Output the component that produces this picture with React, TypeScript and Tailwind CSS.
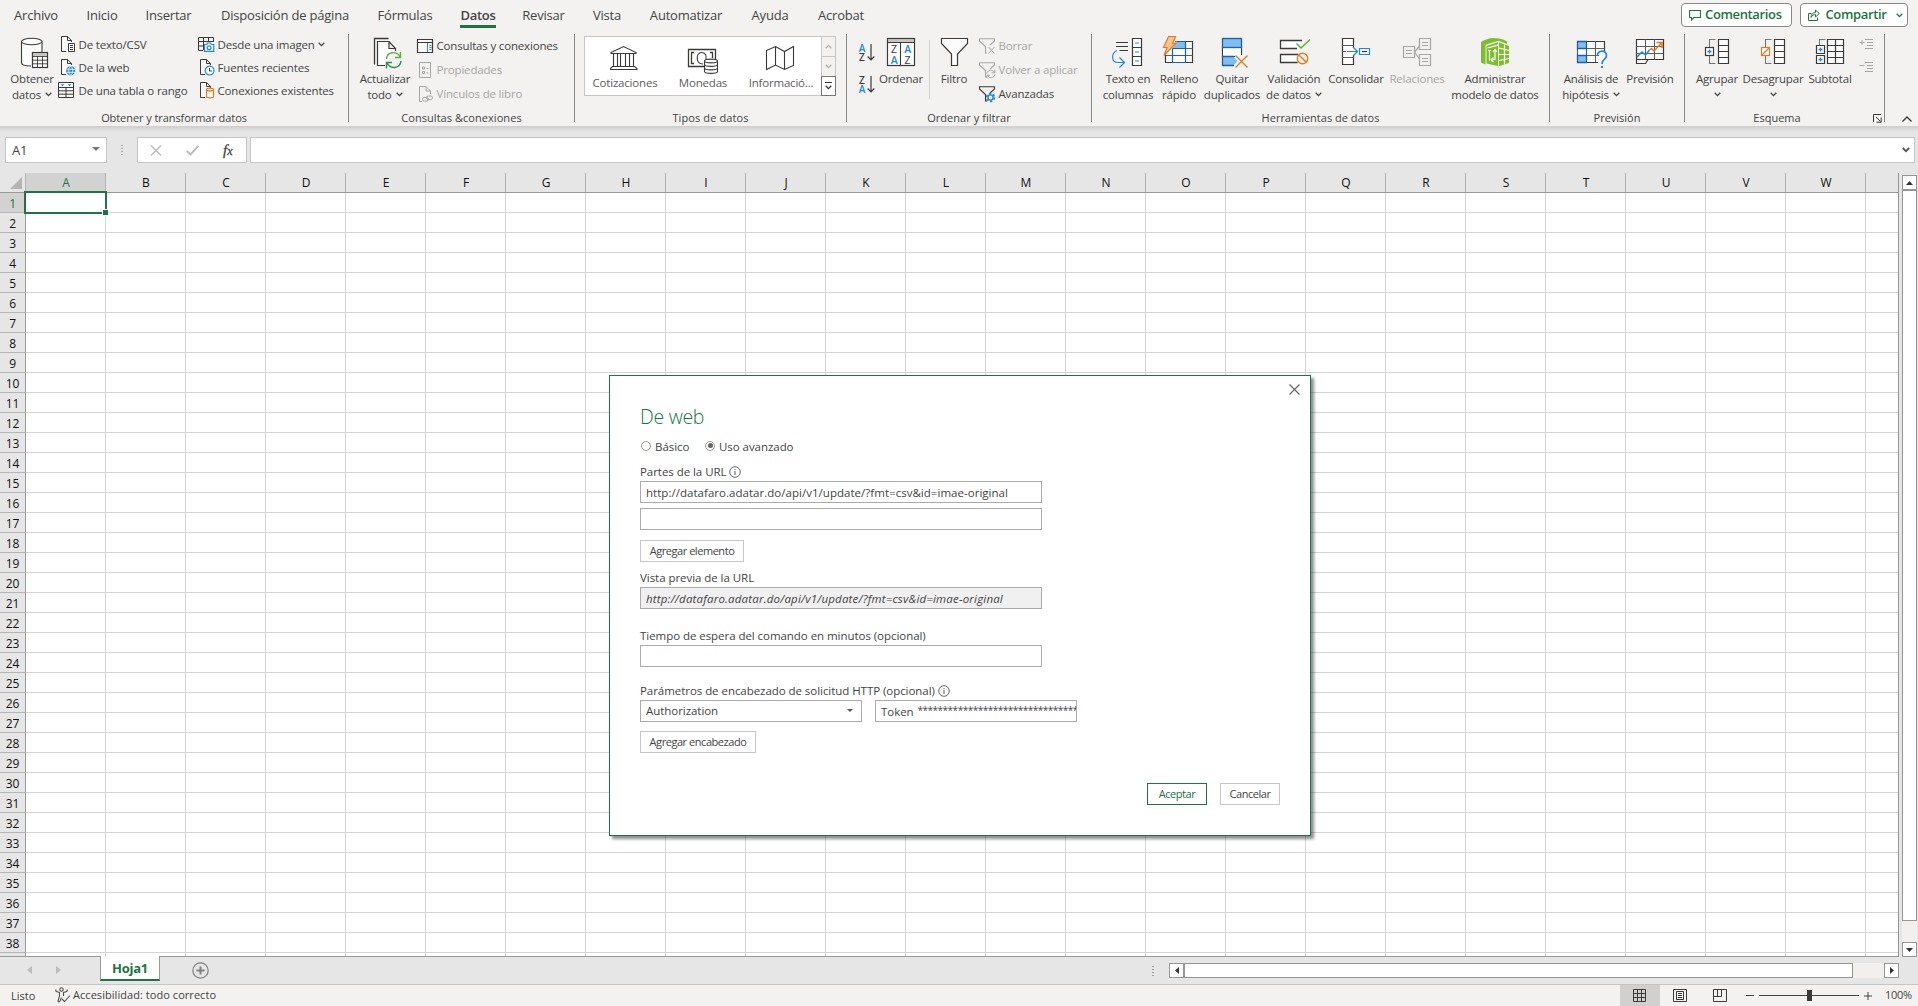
import type { ReactNode } from "react";
import clsx from "clsx";

const DARK = "#3b3a39";
const GRAY = "#a8a6a4";
const BLUE = "#2488d8";
const ORANGE = "#e07b28";
const GREEN = "#217346";

const tabs = [
  { label: "Archivo", width: "w-[72px]" },
  { label: "Inicio", width: "w-[60px]" },
  { label: "Insertar", width: "w-[73px]" },
  { label: "Disposición de página", width: "w-[160px]" },
  { label: "Fórmulas", width: "w-[80px]" },
  { label: "Datos", width: "w-[66px]", active: true },
  { label: "Revisar", width: "w-[65px]" },
  { label: "Vista", width: "w-[62px]" },
  { label: "Automatizar", width: "w-[96px]" },
  { label: "Ayuda", width: "w-[72px]" },
  { label: "Acrobat", width: "w-[70px]" },
];

const columns = "ABCDEFGHIJKLMNOPQRSTUVW".split("");
const rows = Array.from({ length: 39 }, (_, i) => i + 1);

/* ---------- Small shared pieces ---------- */

const Chevron = ({ className = "" }: { className?: string }) => (
  <svg width="7" height="5" viewBox="0 0 7 5" fill="none" stroke="currentColor" strokeWidth="1.3" className={clsx("inline-block", className)}>
    <path d="M0.7 0.8L3.5 3.6L6.3 0.8" />
  </svg>
);

const Icon36 = ({ children }: { children: ReactNode }) => (
  <svg width="36" height="36" viewBox="0 0 36 36" fill="none" stroke={DARK} strokeWidth="1.1" className="shrink-0 overflow-visible">
    {children}
  </svg>
);

const Icon16 = ({ children, color = DARK }: { children: ReactNode; color?: string }) => (
  <svg width="17" height="17" viewBox="0 0 17 17" fill="none" stroke={color} strokeWidth="1" className="shrink-0 overflow-visible">
    {children}
  </svg>
);

const Group = ({ label, width, labelClass = "", launcher, children }: { label: string; width: string; labelClass?: string; launcher?: boolean; children: ReactNode }) => (
  <section className={clsx("flex h-[88px] shrink-0 flex-col border-r border-[#8a8886]", width)}>
    <div className="flex h-[76px] shrink-0 items-start">{children}</div>
    <div className={clsx("relative shrink-0 pt-[2px] text-center text-[11px] leading-[12px] whitespace-nowrap", labelClass)}>
      {label}
      {launcher && (
        <svg width="9" height="9" viewBox="0 0 9 9" fill="none" stroke={DARK} className="absolute top-[4px] right-[2px]">
          <path d="M0.5 8V0.5H8M3 3L7.5 7.5M8.2 3.5V8.2H3.5" />
        </svg>
      )}
    </div>
  </section>
);

const BigButton = ({ icon, lines, width, chevron, disabled }: { icon: ReactNode; lines: string[]; width: string; chevron?: boolean; disabled?: boolean }) => (
  <button className={clsx("flex shrink-0 flex-col items-center tracking-[-0.2px]", width, disabled && "text-[#a8a6a4]")}>
    {icon}
    <span className="mt-px h-4 leading-4 whitespace-nowrap">{lines[0]}</span>
    <span className="flex h-4 items-center leading-4 whitespace-nowrap">
      {lines[1]}
      {chevron && <Chevron className={lines[1] ? "-mt-px ml-1" : "-mt-[2px]"} />}
    </span>
  </button>
);

const SmallButton = ({ icon, label, disabled, chevron, height = "h-6" }: { icon: ReactNode; label: string; disabled?: boolean; chevron?: boolean; height?: string }) => (
  <button className={clsx("flex items-center gap-[2.5px] tracking-[-0.17px] whitespace-nowrap", height, disabled && "text-[#a8a6a4]")}>
    {icon}
    {label}
    {chevron && <Chevron className="ml-px" />}
  </button>
);

/* ---------- Icons ---------- */

const PageOutline = () => <path d="M7 15.5H2.5V0.5H8.5L12.5 4.5V6M8.5 0.5V4.5H12.5" fill="#fafafa" />;

const TextFileIcon = () => (
  <Icon16>
    <PageOutline />
    <path d="M9.5 7.5H15.5V15.5H9.5ZM11 9.5H14M11 11.5H14M11 13.5H14" fill="#fafafa" />
  </Icon16>
);

const WebFileIcon = () => (
  <Icon16>
    <PageOutline />
    <circle cx="11.7" cy="11.8" r="4.6" fill={BLUE} stroke="none" />
    <path d="M7.5 10.3H16M7.5 13.3H16M11.7 7.3C9 9.5 9 14 11.7 16.3M11.7 7.3C14.4 9.5 14.4 14 11.7 16.3" stroke="#fff" strokeWidth="0.8" />
  </Icon16>
);

const TableIcon = () => (
  <Icon16>
    <path d="M-0.5 0.5H14.5V15.5H-0.5ZM-0.5 5.5H14.5M-0.5 8.8H14.5M-0.5 12.2H14.5M7 5.5V15.5" fill="#fafafa" />
    <path d="M1.5 2.2H5.5L3.5 4.2ZM8.5 2.2H12.5L10.5 4.2Z" fill={BLUE} stroke="none" />
  </Icon16>
);

const ImageTableIcon = () => (
  <Icon16>
    <path d="M5 14.5H0.5V1.5H15.5V6M0.5 5.5H15.5M0.5 10H6M5.5 1.5V14M10.5 1.5V6" />
    <path d="M6.5 8.5H8.7L9.7 7H12.5L13.5 8.5H15.8V15.3H6.5Z" fill="#f3f9fd" stroke={BLUE} strokeWidth="1.2" />
    <circle cx="11.1" cy="11.8" r="1.9" stroke={BLUE} strokeWidth="1.2" />
  </Icon16>
);

const RecentIcon = () => (
  <Icon16>
    <PageOutline />
    <circle cx="11.6" cy="11.6" r="4.4" fill="#fafafa" stroke={BLUE} strokeWidth="1.2" />
    <path d="M11.5 9V12H13.8" />
  </Icon16>
);

const ConnectionFileIcon = () => (
  <Icon16>
    <PageOutline />
    <path d="M8.5 7.8V14.8C8.5 16.2 15.5 16.2 15.5 14.8V7.8" fill="#fafafa" stroke={ORANGE} strokeWidth="1.2" />
    <ellipse cx="12" cy="7.5" rx="3.5" ry="1.4" fill="#fafafa" stroke={ORANGE} strokeWidth="1.2" />
  </Icon16>
);

const PaneIcon = () => (
  <Icon16>
    <path d="M0.5 1.5H15.5V14.5H0.5ZM0.5 4.5H15.5" fill="#fafafa" strokeWidth="1.2" />
    <path d="M10.5 5V14M12.5 7.5H14.5M12.5 9.5H14.5M12.5 11.5H14.5" stroke={BLUE} />
  </Icon16>
);

const PropertiesIcon = () => (
  <Icon16 color={GRAY}>
    <path d="M2.5 0.5H13.5V15.5H2.5ZM5.5 5H7.5V7H5.5ZM5.5 9.5H7.5V11.5H5.5ZM9.5 6.5H11.5M9.5 11H11.5" />
  </Icon16>
);

const LinkFileIcon = () => (
  <Icon16 color={GRAY}>
    <path d="M5 15.5H2.5V0.5H9L13.5 5V8M9 0.5V5H13.5" />
    <rect x="5.5" y="11.5" width="6" height="3.6" rx="1.8" />
    <rect x="9.5" y="10" width="6" height="3.6" rx="1.8" />
  </Icon16>
);

const FunnelSmall = ({ color = DARK, children }: { color?: string; children: ReactNode }) => (
  <Icon16 color={color}>
    <path d="M8 15H6.5V8.5L0.5 3V0.8H15.5V3L11 7" strokeWidth="1.1" />
    {children}
  </Icon16>
);

const GetDataIcon = () => (
  <Icon36>
    <path d="M7.5 7.5V29.5C7.5 31 11 32.3 17 32.5V18H28V7.5" fill="#fcfcfc" stroke="none" />
    <path d="M7.5 7.5V29C7.5 30.8 11 31.8 17 32M28 7.5V18" />
    <ellipse cx="17.75" cy="7.5" rx="10.25" ry="3.3" fill="#fcfcfc" />
    <rect x="18.5" y="18.5" width="15" height="15" fill="#fcfcfc" />
    <rect x="19" y="19" width="14" height="3" fill="#c8c6c4" stroke="none" />
    <path d="M18.5 22.5H33.5M18.5 26.2H33.5M18.5 29.8H33.5M23.5 22.5V33.5M28.5 22.5V33.5" strokeWidth="0.9" />
    <rect x="18.5" y="18.5" width="15" height="15" />
  </Icon36>
);

const RefreshAllIcon = () => (
  <Icon36>
    <path d="M7.5 30.5V4.5H21.5" strokeWidth="1.3" />
    <path d="M18 31.5H10.5V7.5H22L28.5 14.5V17M22 7.5V14.5H28.5" fill="#fcfcfc" strokeWidth="1.2" />
    <path d="M19.5 25C20 17.5 30 16.5 33.2 23M33.5 18V23.5H28" stroke="#62ad45" strokeWidth="1.4" />
    <path d="M34 27C33 35 23.5 35.5 20 29M19.5 34.5V28.5H25" stroke="#2e8b4b" strokeWidth="1.4" />
  </Icon36>
);

const BankIcon = () => (
  <svg width="32" height="28" viewBox="0 0 32 28" fill="none" stroke={DARK} strokeWidth="1.1" className="mr-px">
    <path d="M2 8.5L14.5 2.5L27 8.5V9.5H2ZM4.5 9.5V22.5M8.5 9.5V22.5M11.5 9.5V22.5M16.5 9.5V22.5M20.5 9.5V22.5M24.5 9.5V22.5M3.5 22.5H25.5L28 24.5V25.5H1.5V24.5Z" />
  </svg>
);

const CurrencyIcon = () => (
  <svg width="32" height="28" viewBox="0 0 32 28" fill="none" stroke={DARK} strokeWidth="1.1" className="overflow-visible">
    <path d="M18 22.5H1.5V5.5H28.5V15M7 8.5H4.5V19.5H7M23 8.5H25.5V14" strokeWidth="1.3" />
    <path d="M16 20C8.5 20 8.5 8.5 14.5 8.5C18.5 8.5 19.5 11.5 19 15" />
    <path d="M17.5 17V27.5C17.5 30 30.5 30 30.5 27.5V17" fill="#fff" />
    <ellipse cx="24" cy="17" rx="6.5" ry="1.9" fill="#fff" />
    <path d="M17.5 20.5C17.5 23 30.5 23 30.5 20.5M17.5 24C17.5 26.5 30.5 26.5 30.5 24" />
  </svg>
);

const MapIcon = () => (
  <svg width="32" height="28" viewBox="0 0 32 28" fill="none" stroke={DARK} strokeWidth="1.1" className="overflow-visible">
    <path d="M1.5 6.5L10.5 2.5L19.5 7.5L28.5 2.5V21.5L19.5 25.5L10.5 21L1.5 25.5ZM10.5 2.5V21M19.5 7.5V25.5" />
  </svg>
);

const SortIcon = ({ top, bottom, topClass, bottomClass }: { top: string; bottom: string; topClass: string; bottomClass: string }) => (
  <button className="flex h-[18px] items-start">
    <span className="flex w-[8px] flex-col text-[10px] leading-[9px] font-semibold">
      <span className={topClass}>{top}</span>
      <span className={bottomClass}>{bottom}</span>
    </span>
    <svg width="8" height="17" viewBox="0 0 8 17" fill="none" stroke={DARK} strokeWidth="1.2" className="ml-px">
      <path d="M4 0V16M0.7 12.5L4 16L7.3 12.5" />
    </svg>
  </button>
);

const SortDialogIcon = () => (
  <Icon36>
    <rect x="4.5" y="4.5" width="27" height="27" fill="#fff" />
    <rect x="5" y="5" width="26" height="3.5" fill="#c8c6c4" stroke="none" />
    <path d="M4.5 8.5H31.5M17.5 8.5V31.5" />
    <rect x="4.5" y="4.5" width="27" height="27" />
    <g stroke="none" fontSize="10.5" textAnchor="middle" className="font-semibold">
      <text x="11" y="19" fill={DARK} fontWeight="400">Z</text>
      <text x="11" y="29.5" fill={BLUE}>A</text>
      <text x="24.5" y="19" fill={BLUE}>A</text>
      <text x="24.5" y="29.5" fill={DARK} fontWeight="400">Z</text>
    </g>
  </Icon36>
);

const FilterIcon = () => (
  <Icon36>
    <path d="M5.5 4.5H31.5V9.5L21.5 20V31.5H15.5V20L5.5 9.5Z" fill="#fcfcfc" strokeWidth="1.2" />
  </Icon36>
);

const TextColumnsIcon = () => (
  <Icon36>
    <path d="M6 8.5H18M6 12.5H18M9.5 16.5H18" strokeWidth="1.2" />
    <path d="M22.5 4.5H31.5V31.5H22.5ZM22.5 13.5H31.5M22.5 22.5H31.5" fill="#fcfcfc" strokeWidth="1.2" />
    <path d="M25 9H29M25 18H29M25 27H29" stroke={BLUE} strokeWidth="1.2" />
    <path d="M7 16.5C1 19 1 28.5 8 28.5H14.5M9.5 23.5L14.5 28.5L9.5 33.5" stroke={BLUE} strokeWidth="1.2" />
  </Icon36>
);

const FlashFillIcon = () => (
  <Icon36>
    <path d="M4.5 20V28.5H31.5V7.5H14" fill="#fcfcfc" strokeWidth="1.2" />
    <path d="M4.5 21.5H31.5M12 14.5H31.5" stroke="#605e5c" />
    <path d="M14 7.5H24.5V14.5H11.5Z" fill="#83bdec" stroke="none" />
    <path d="M11.5 14.5H24.5M11.5 21.5H24.5M11.5 14.5V28.5H24.5V7.5H16" stroke="#1d5fa8" strokeWidth="1.2" />
    <path d="M7.5 2.5H14.5L11.5 9.5H14.5L3 21.5L6 13.5H2.5Z" fill="#fbc58f" stroke={ORANGE} strokeWidth="1.2" />
  </Icon36>
);

const DuplicatesIcon = () => (
  <Icon36>
    <path d="M8.5 13.5V22.5H21M27.5 13.5V21" strokeWidth="1.2" />
    <rect x="9" y="14" width="18" height="8" fill="#fcfcfc" stroke="none" />
    <rect x="8.5" y="4.5" width="19" height="9" fill="#83bdec" stroke="#1d5fa8" strokeWidth="1.3" />
    <path d="M19.5 22.5H8.5V31.5H19.5L23.5 27Z" fill="#83bdec" stroke="none" />
    <path d="M20 22.5H8.5V31.5H20" stroke="#1d5fa8" strokeWidth="1.3" />
    <path d="M21.5 21.5L33.5 33.5M33.5 21.5L21.5 33.5" stroke={ORANGE} strokeWidth="1.4" />
  </Icon36>
);

const ValidationIcon = () => (
  <Icon36>
    <path d="M26 6.5H4.5V14.5H21M22 20.5H4.5V28.5H21.5" fill="#fcfcfc" strokeWidth="1.3" />
    <path d="M20.5 9.5L25 14L34 5.5" stroke="#5fae3f" strokeWidth="1.5" />
    <circle cx="26.5" cy="24.5" r="5.2" fill="#fff4e8" stroke={ORANGE} strokeWidth="1.4" />
    <path d="M22.9 20.9L30.1 28.1" stroke={ORANGE} strokeWidth="1.4" />
  </Icon36>
);

const ConsolidateIcon = () => (
  <Icon36>
    <path d="M4.5 4.5H15.5V30.5H4.5Z" fill="#fcfcfc" stroke="none" />
    <path d="M15.5 13.5V4.5H4.5V30.5H15.5V21.5" strokeWidth="1.2" />
    <path d="M4.5 11.5H15.5M4.5 17.5H8M4.5 23.5H15.5" stroke="#605e5c" />
    <path d="M9 17.5H19.5M15 13L19.5 17.5L15 22M21.5 14.5H31.5V20.5H21.5Z" stroke={BLUE} strokeWidth="1.2" />
    <path d="M24 17.5H29" />
  </Icon36>
);

const RelationsIcon = () => (
  <Icon36>
    <g stroke={GRAY} strokeWidth="1.2">
      <path d="M4.5 12.5H15.5V23.5H4.5ZM20.5 4.5H31.5V15.5H20.5ZM20.5 20.5H31.5V31.5H20.5Z" />
      <path d="M7 16.5H13M7 19.5H13M23 8.5H29M23 11.5H29M23 24.5H29M23 27.5H29M15.5 18L20.5 12M15.5 18L20.5 25" />
    </g>
  </Icon36>
);

const DataModelIcon = () => (
  <Icon36>
    <g stroke="none" fill="#7cbf2c">
      <path d="M4 8C8 5.5 12 4.2 16 4C21 4 26 4.5 30 7.5V10L21.5 6.8L8.5 10.8V30.5L4 28.5Z" />
      <path d="M9.5 12L21 8.2V32L9.5 29.5Z" />
      <path d="M22 8.2L32 12V29L22 32Z" />
    </g>
    <path d="M10.5 14L21 11.2M22 14L32 16.5M22 20.5H32M22 26.5L32 24.5M27.5 10.5V30.5" stroke="#fff" strokeWidth="1.2" />
    <path d="M12.5 16V26.5M11 16.5H14M15 27.5L14.5 25.5H18V16M16 18L18 15.5L20 18M16.5 23.5L14.2 25.7L16.5 28" stroke="#fff" strokeWidth="1.2" />
  </Icon36>
);

const WhatIfIcon = () => (
  <Icon36>
    <rect x="4.5" y="7.5" width="27" height="21" fill="#fcfcfc" stroke="none" />
    <path d="M13.5 7.5H31.5V17M13.5 28.5H25" strokeWidth="1.2" />
    <path d="M13.5 14.5H31.5M13.5 21.5H26M22.5 7.5V28.5" stroke="#605e5c" />
    <path d="M4.5 7.5H13.5V14.5H4.5ZM4.5 21.5H13.5V28.5H4.5Z" fill="#83bdec" stroke="#1d5fa8" strokeWidth="1.3" />
    <path d="M4.5 14.5V21.5M13.5 14.5V21.5" stroke="#1d5fa8" />
    <path d="M24.5 22C24.5 15.5 33.5 15.5 33.5 21.5C33.5 25.5 29 25 29 30" stroke={BLUE} strokeWidth="1.7" />
    <rect x="28" y="32" width="2" height="2" fill={BLUE} stroke="none" />
  </Icon36>
);

const ForecastIcon = () => (
  <Icon36>
    <path d="M4.5 29.5V5.5H31.5V25.5H16L13.5 29.5Z" fill="#fcfcfc" strokeWidth="1.2" />
    <path d="M4.5 12.5H31.5M4.5 19.5H31.5M13.5 5.5V25.5M22.5 5.5V25.5" stroke="#605e5c" />
    <path d="M4.5 25.5H16" />
    <path d="M5 23L10 18L13.5 21L17.5 16" stroke={BLUE} strokeWidth="1.5" />
    <path d="M17.5 16L19.5 14.5L22 17L30 8.5M24.5 8.5H30V14" stroke={ORANGE} strokeWidth="1.5" />
  </Icon36>
);

const GroupIcon = ({ remove }: { remove?: boolean }) => (
  <Icon36>
    <path d="M19.5 5.5H29.5V29.5H19.5ZM19.5 11.5H29.5M19.5 17.5H29.5M19.5 23.5H29.5" fill="#fcfcfc" strokeWidth="1.2" />
    <path d="M16.5 5.5H10.5V13M10.5 22V29.5H16.5" stroke="#797775" />
    <rect x="6.5" y="13.5" width="8" height="8" fill="#fcfcfc" stroke={remove ? ORANGE : DARK} strokeWidth="1.2" />
    {remove ? <path d="M7 21L14 14" stroke={ORANGE} strokeWidth="1.3" /> : <path d="M8.5 17.5H12.5M10.5 15.5V19.5" stroke={BLUE} strokeWidth="1.3" />}
  </Icon36>
);

const SubtotalIcon = () => (
  <Icon36>
    <path d="M15.5 5.5H31.5V29.5H15.5ZM15.5 11.5H31.5M15.5 17.5H31.5M15.5 23.5H31.5M23.5 5.5V29.5" fill="#fcfcfc" strokeWidth="1.2" />
    <path d="M13.5 5.5H7.5V11" stroke="#797775" />
    <path d="M4.5 11.5H12.5V19.5H4.5ZM4.5 21.5H12.5V29.5H4.5Z" fill="#fcfcfc" strokeWidth="1.2" />
    <path d="M6.5 15.5H10.5M8.5 13.5V17.5M6.5 25.5H10.5M8.5 23.5V27.5" stroke={BLUE} strokeWidth="1.3" />
  </Icon36>
);

const DetailIcon = ({ plus }: { plus?: boolean }) => (
  <svg width="15" height="11" viewBox="0 0 15 11" fill="none" stroke={GRAY}>
    <path d="M6 0.5H14M8 3.5H14M8 6.5H14M6 9.5H14M0.5 3.5H5.5" />
    {plus && <path d="M3 1V6" />}
  </svg>
);

/* ---------- Ribbon ---------- */

const TopBar = () => (
  <nav className="flex h-[31px] justify-between">
    <div className="flex">
      {tabs.map((tab) => (
        <div key={tab.label} className={clsx("flex flex-col items-center pt-[6px] text-[13px] leading-[19px] whitespace-nowrap text-[#444]", tab.width, tab.active ? "font-semibold tracking-[-0.3px]" : "tracking-[-0.2px]")}>
          {tab.label}
          {tab.active && <div className="h-[3px] w-9 bg-[#217346]" />}
        </div>
      ))}
    </div>
    <div className="flex gap-2 pt-[3px] pr-[10px] text-[13px] font-semibold tracking-[-0.35px] text-[#217346]">
      <button className="flex h-6 w-[111px] items-center rounded border border-[#8a8886] bg-white pl-[7px]">
        <svg width="12" height="12" viewBox="0 0 12 12" fill="none" stroke={GREEN} strokeWidth="1.1">
          <path d="M0.6 1.5H11.4V8.5H5L2.5 11V8.5H0.6Z" />
        </svg>
        <span className="ml-[4px]">Comentarios</span>
      </button>
      <button className="flex h-6 w-[108px] items-center rounded border border-[#8a8886] bg-white pl-[7px]">
        <svg width="12" height="12" viewBox="0 0 12 12" fill="none" stroke={GREEN}>
          <path d="M3.5 4.5H0.5V11.5H9.5V8.5M3 8.5C3 5 5 3.5 7.5 3.5V1L11.3 4.5L7.5 8V5.5C5.5 5.5 4 6.5 3 8.5Z" />
        </svg>
        <span className="ml-[4px] w-[64px]">Compartir</span>
        <Chevron className="ml-2" />
      </button>
    </div>
  </nav>
);

const DataTypes = () => (
  <div className="mt-[2px] ml-[9px] flex h-[60px] w-[252px] border border-[#c8c6c4] bg-white">
    {[
      { label: "Cotizaciones", icon: <BankIcon /> },
      { label: "Monedas", icon: <CurrencyIcon /> },
      { label: "Informació...", icon: <MapIcon /> },
    ].map((item, i) => (
      <div key={item.label} className={clsx("flex w-[78px] flex-col items-center pt-[7px] leading-4 tracking-[-0.2px] text-[#605e5c]", i === 0 && "ml-px")}>
        {item.icon}
        <span className="mt-[3px]">{item.label}</span>
      </div>
    ))}
    <div className="-my-px -mr-px ml-auto flex w-[15px] flex-col text-[#b3b0ad]">
      <div className="flex h-[21px] items-center justify-center border border-[#c8c6c4] bg-[#f3f2f1]">
        <Chevron className="rotate-180" />
      </div>
      <div className="flex h-[19px] items-center justify-center border-x border-[#c8c6c4] bg-[#f3f2f1]">
        <Chevron />
      </div>
      <div className="flex h-[20px] flex-col items-center justify-center gap-[2px] border border-[#797775] bg-white text-[#3b3a39]">
        <div className="h-px w-[7px] bg-[#3b3a39]" />
        <Chevron />
      </div>
    </div>
  </div>
);

const Ribbon = () => (
  <div className="flex h-[95px] pt-[3px] text-[11.5px]">
    <Group label="Obtener y transformar datos" width="w-[349px]" labelClass="tracking-[-0.07px]">
      <div className="ml-[6px]">
        <BigButton width="w-[52px]" icon={<GetDataIcon />} lines={["Obtener", "datos"]} chevron />
      </div>
      <div className="-mt-px ml-px w-[138px]">
        <SmallButton height="h-[23px]" icon={<TextFileIcon />} label="De texto/CSV" />
        <SmallButton height="h-[23px]" icon={<WebFileIcon />} label="De la web" />
        <SmallButton height="h-[23px]" icon={<TableIcon />} label="De una tabla o rango" />
      </div>
      <div className="-mt-px ml-px">
        <SmallButton height="h-[23px]" icon={<ImageTableIcon />} label="Desde una imagen" chevron />
        <SmallButton height="h-[23px]" icon={<RecentIcon />} label="Fuentes recientes" />
        <SmallButton height="h-[23px]" icon={<ConnectionFileIcon />} label="Conexiones existentes" />
      </div>
    </Group>

    <Group label="Consultas &conexiones" width="w-[226px]" labelClass="tracking-[0.05px]">
      <div className="ml-[10px]">
        <BigButton width="w-[52px]" icon={<RefreshAllIcon />} lines={["Actualizar", "todo"]} chevron />
      </div>
      <div className="ml-[6px]">
        <SmallButton icon={<PaneIcon />} label="Consultas y conexiones" />
        <SmallButton icon={<PropertiesIcon />} label="Propiedades" disabled />
        <SmallButton icon={<LinkFileIcon />} label="Vínculos de libro" disabled />
      </div>
    </Group>

    <Group label="Tipos de datos" width="w-[272px]" labelClass="tracking-[0.1px]">
      <DataTypes />
    </Group>

    <Group label="Ordenar y filtrar" width="w-[245px]" labelClass="tracking-[0.05px]">
      <div className="mt-[10px] ml-[11px] flex flex-col gap-[14px]">
        <SortIcon top="A" bottom="Z" topClass="text-[#2488d8]" bottomClass="text-[#3b3a39]" />
        <SortIcon top="Z" bottom="A" topClass="text-[#3b3a39]" bottomClass="text-[#2488d8]" />
      </div>
      <div className="ml-px">
        <BigButton width="w-[50px]" icon={<SortDialogIcon />} lines={["Ordenar"]} />
      </div>
      <div className="mt-[6px] mr-1 ml-[3px] h-[59px] w-px bg-[#d2d0ce]" />
      <BigButton width="w-[40px]" icon={<FilterIcon />} lines={["Filtro"]} />
      <div className="ml-[5px]">
        <SmallButton
          disabled
          label="Borrar"
          icon={
            <FunnelSmall color={GRAY}>
              <path d="M9.5 9L15.5 15.5M15.5 9L9.5 15.5" />
            </FunnelSmall>
          }
        />
        <SmallButton
          disabled
          label="Volver a aplicar"
          icon={
            <FunnelSmall color={GRAY}>
              <path d="M8 11.5C8.5 7.5 14 7.5 15.5 10.5M15.8 7.5V10.8H12.5M16 12.5C15 16.5 10 16.5 8.5 13.5M8 16.3V13.2H11" />
            </FunnelSmall>
          }
        />
        <SmallButton
          label="Avanzadas"
          icon={
            <FunnelSmall>
              <circle cx="11.5" cy="11.5" r="3.7" stroke={BLUE} strokeWidth="2" strokeDasharray="2.3 1.57" />
              <circle cx="11.5" cy="11.5" r="2.6" stroke={BLUE} strokeWidth="1.3" fill="#f3f2f1" />
            </FunnelSmall>
          }
        />
      </div>
    </Group>

    <Group label="Herramientas de datos" width="w-[458px]">
      <div className="ml-[9px] flex">
        <BigButton width="w-[54px]" icon={<TextColumnsIcon />} lines={["Texto en", "columnas"]} />
        <BigButton width="w-[48px]" icon={<FlashFillIcon />} lines={["Relleno", "rápido"]} />
        <BigButton width="w-[58px]" icon={<DuplicatesIcon />} lines={["Quitar", "duplicados"]} />
        <BigButton width="w-[66px]" icon={<ValidationIcon />} lines={["Validación", "de datos"]} chevron />
        <BigButton width="w-[58px]" icon={<ConsolidateIcon />} lines={["Consolidar"]} />
        <BigButton width="w-[64px]" icon={<RelationsIcon />} lines={["Relaciones"]} disabled />
        <BigButton width="w-[92px]" icon={<DataModelIcon />} lines={["Administrar", "modelo de datos"]} />
      </div>
    </Group>

    <Group label="Previsión" width="w-[135px]">
      <div className="ml-[9px] flex">
        <BigButton width="w-[64px]" icon={<WhatIfIcon />} lines={["Análisis de", "hipótesis"]} chevron />
        <BigButton width="w-[54px]" icon={<ForecastIcon />} lines={["Previsión"]} />
      </div>
    </Group>

    <Group label="Esquema" width="w-[200px]" labelClass="pr-[15px]" launcher>
      <div className="ml-[9px] flex">
        <BigButton width="w-[46px]" icon={<GroupIcon />} lines={["Agrupar"]} chevron />
        <BigButton width="w-[66px]" icon={<GroupIcon remove />} lines={["Desagrupar"]} chevron />
        <BigButton width="w-[48px]" icon={<SubtotalIcon />} lines={["Subtotal"]} />
      </div>
      <div className="mt-[5px] ml-[5px] flex flex-col gap-3">
        <DetailIcon plus />
        <DetailIcon />
      </div>
    </Group>

    <svg width="10" height="7" viewBox="0 0 10 7" fill="none" stroke={DARK} strokeWidth="1.4" className="mt-[82px] ml-[17px]">
      <path d="M0.5 5.5L5 1L9.5 5.5" />
    </svg>
  </div>
);

const FormulaBar = () => (
  <div className="h-[47px] bg-[#e6e6e6]">
    <div className="h-[6px] bg-linear-to-b from-[#cfcdcc] to-[#e6e6e6]" />
    <div className="mt-[5px] flex h-[26px]">
      <div className="ml-[5px] flex w-[102px] items-center justify-between border border-[#c6c6c6] bg-white pt-px pr-[6px] pl-[6px] text-[13px] tracking-[-0.3px] text-[#444]">
        A1
        <svg width="8" height="4" viewBox="0 0 8 4" fill="#777" className="-mt-1">
          <path d="M0 0H8L4 4Z" />
        </svg>
      </div>
      <div className="flex w-[30px] flex-col items-center justify-center gap-[2px]">
        {[0, 1, 2, 3].map((n) => (
          <div key={n} className="h-px w-[2px] bg-[#a6a6a6]" />
        ))}
      </div>
      <div className="flex w-[110px] items-center border border-[#c6c6c6] bg-white pl-[12px]">
        <svg width="12" height="11" viewBox="0 0 12 11" fill="none" stroke="#bdbdbd" strokeWidth="1.5">
          <path d="M1 0.5L11 10.5M11 0.5L1 10.5" />
        </svg>
        <svg width="13" height="11" viewBox="0 0 13 11" fill="none" stroke="#bdbdbd" strokeWidth="2" className="ml-[24px]">
          <path d="M0.8 6L4.5 9.5L12.3 0.8" />
        </svg>
        <span className="ml-[24px] font-['Liberation_Serif',serif] text-[15px] leading-none text-[#444] italic [-webkit-text-stroke:0.3px_#444]">
          f<span className="text-[12px]">x</span>
        </span>
      </div>
      <div className="ml-[3px] flex w-[1665px] items-center justify-end border border-[#c6c6c6] bg-white pr-[4px] text-[#555]">
        <svg width="8" height="6" viewBox="0 0 8 6" fill="none" stroke="currentColor" strokeWidth="1.8">
          <path d="M0.8 1L4 4.2L7.2 1" />
        </svg>
      </div>
    </div>
  </div>
);

/* ---------- Sheet ---------- */

const Sheet = () => (
  <div className="relative h-[783px] w-[1899px] overflow-hidden border-r border-[#969696] bg-white">
    <div className="flex h-5 border-b border-[#999] bg-[#e6e6e6]">
      <div className="flex w-[26px] items-end justify-end border-r border-[#b5b5b5] pr-[3px] pb-[3px]">
        <svg width="12" height="12" viewBox="0 0 12 12" fill="#b4b4b4">
          <path d="M12 0V12H0Z" />
        </svg>
      </div>
      {columns.map((col) => (
        <div key={col} className={clsx("w-20 border-r border-[#b2b2b2] pl-px text-center text-[12px] leading-[19px]", col === "A" ? "bg-[#d2d2d2] text-[#217346]" : "text-[#111]")}>
          {col}
        </div>
      ))}
    </div>
    {rows.map((row) => (
      <div key={row} className="flex h-5">
        <div className={clsx("w-[26px] border-r border-b border-r-[#999] border-b-[#b5b5b5] text-center text-[12px] leading-[22px] tracking-[-0.2px]", row === 1 ? "bg-[#d2d2d2] text-[#217346]" : "bg-[#e6e6e6] text-[#111]")}>
          {row < 39 && row}
        </div>
        {columns.map((col) => (
          <div key={col} className="w-20 border-r border-b border-[#d4d4d4]" />
        ))}
        <div className="flex-1 border-b border-[#d4d4d4]" />
      </div>
    ))}
    {/* Active cell */}
    <div className="absolute top-[18px] left-6 h-[23px] w-[83px] border-2 border-[#217346]">
      <div className="absolute -right-[4px] -bottom-[4px] size-[7px] border border-white bg-[#217346]" />
    </div>
  </div>
);

const VerticalScroll = () => (
  <div className="mt-[2px] ml-[3px] flex h-[782px] w-[15px] flex-col bg-[#f1f0ef]">
    <div className="flex h-[15px] items-center justify-center border border-[#969696] bg-white">
      <svg width="7" height="4" viewBox="0 0 7 4" fill="#333"><path d="M0 4L3.5 0L7 4Z" /></svg>
    </div>
    <div className="h-[731px] border border-[#969696] bg-white" />
    <div className="mt-auto flex h-[15px] items-center justify-center border border-[#969696] bg-white">
      <svg width="7" height="4" viewBox="0 0 7 4" fill="#333"><path d="M0 0L3.5 4L7 0Z" /></svg>
    </div>
  </div>
);

const SheetTabs = () => (
  <div className="flex h-[29px] border-b border-[#c6c6c6] bg-[#e6e6e6]">
    <div className="flex w-[100px] items-center border-t border-[#999] pb-[2px] pl-[27px]">
      <svg width="5" height="8" viewBox="0 0 5 8" fill="#bbb"><path d="M5 0V8L0 4Z" /></svg>
      <svg width="5" height="8" viewBox="0 0 5 8" fill="#bbb" className="ml-[24px]"><path d="M0 0V8L5 4Z" /></svg>
    </div>
    <div className="flex h-[25px] w-[60px] items-center justify-center border-x border-b-2 border-x-[#999] border-b-[#217346] bg-white pt-[3px] text-[13px] font-bold tracking-[-0.25px] text-[#217346]">
      Hoja1
    </div>
    <div className="flex w-[1739px] items-center border-t border-[#999]">
      <svg width="17" height="17" viewBox="0 0 17 17" fill="none" stroke="#808080" className="-mt-px ml-[32px]">
        <circle cx="8.5" cy="8.5" r="7.7" strokeWidth="1.2" />
        <path d="M8.5 4.5V12.5M4.5 8.5H12.5" strokeWidth="2" />
      </svg>
      <div className="ml-auto flex w-[2px] flex-col gap-[2px]">
        {[0, 1, 2, 3].map((n) => (
          <div key={n} className="h-px w-[2px] bg-[#999]" />
        ))}
      </div>
      <div className="ml-[15px] flex h-[15px] w-[730px] bg-[#f1f0ef]">
        <div className="flex w-[15px] items-center justify-center border border-[#969696] bg-white">
          <svg width="4" height="7" viewBox="0 0 4 7" fill="#333"><path d="M4 0V7L0 3.5Z" /></svg>
        </div>
        <div className="w-[669px] border border-[#969696] bg-white" />
        <div className="ml-auto flex w-[15px] items-center justify-center border border-[#969696] bg-white">
          <svg width="4" height="7" viewBox="0 0 4 7" fill="#333"><path d="M0 0V7L4 3.5Z" /></svg>
        </div>
      </div>
    </div>
  </div>
);

const StatusBar = () => (
  <footer className="flex h-[21px] items-center bg-[#f3f2f1] text-[11px] text-[#444]">
    <span className="ml-[11px] w-[44px] pt-px">Listo</span>
    <svg width="16" height="16" viewBox="0 0 16 16" fill="none" stroke="#505050" strokeWidth="1.1" className="-mt-px">
      <circle cx="6.5" cy="2.5" r="1.7" />
      <path d="M1 2.5C0.5 3.5 1 4.5 2 4.8L4.5 5.5V9L3 14C3.5 15.5 4.5 15 5 14L6.5 10.5M12 2.5C12.5 3.5 12 4.5 11 4.8L8.5 5.5V9M7 12L9.5 14.5L15 8.5" />
    </svg>
    <span className="ml-[2px] tracking-[0.05px]">Accesibilidad: todo correcto</span>
    <div className="ml-auto flex h-full items-center">
      <div className="flex h-full w-10 items-center justify-center bg-[#d2d0ce]">
        <svg width="13" height="13" viewBox="0 0 13 13" fill="none" stroke={DARK} className="-mt-px mr-[2px]">
          <path d="M0.5 0.5H12.5V12.5H0.5ZM4.5 0.5V12.5M8.5 0.5V12.5M0.5 4.5H12.5M0.5 8.5H12.5" />
        </svg>
      </div>
      <svg width="14" height="13" viewBox="0 0 14 13" fill="none" stroke={DARK} className="-mt-px ml-[13px]">
        <path d="M0.5 0.5H13.5V12.5H0.5ZM3.5 2.5H10.5V10.5H3.5ZM5 4.5H9M5 6.5H9M5 8.5H9" />
      </svg>
      <svg width="14" height="13" viewBox="0 0 14 13" fill="none" stroke={DARK} className="-mt-px ml-[26px]">
        <path d="M0.5 0.5H13.5V12.5H0.5ZM4.5 0.5V7.5M8.5 0.5V7.5H0.5" />
      </svg>
      <div className="ml-[19px] h-px w-2 bg-[#444]" />
      <div className="ml-[5px] flex h-px w-[100px] items-center bg-[#444]">
        <div className="ml-[48px] h-[11px] w-[5px] bg-[#3b3a39]" />
      </div>
      <svg width="8" height="8" viewBox="0 0 8 8" stroke="#444" className="ml-[5px]">
        <path d="M4 0V8M0 4H8" />
      </svg>
      <span className="ml-[13px] w-[33px] tracking-[-0.3px]">100%</span>
    </div>
  </footer>
);

/* ---------- Dialog ---------- */

const InfoIcon = () => (
  <svg width="12" height="12" viewBox="0 0 12 12" fill="none" stroke="#555" className="ml-[3px] inline-block">
    <circle cx="6" cy="6" r="5.3" strokeWidth="0.9" />
    <path d="M6 5V9M6 3V4" />
  </svg>
);

const Label = ({ children }: { children: ReactNode }) => <div className="flex h-4 items-center leading-4 whitespace-nowrap">{children}</div>;

const Field = ({ value = "", readOnly }: { value?: string; readOnly?: boolean }) => (
  <div className={clsx("h-[22px] w-[402px] border border-[#ababab] pl-[5px] leading-[21px] whitespace-nowrap", readOnly ? "bg-[#f0f0f0] tracking-[0.18px] italic" : "bg-white tracking-[0.03px]")}>{value}</div>
);

const WebDialog = () => (
  <div className="absolute top-[375px] left-[609px] h-[461px] w-[702px] border border-[#217346] bg-white pl-[30px] text-[11.5px] tracking-[-0.05px] text-[#444] shadow-[3px_3px_3px_rgba(0,0,0,0.45)]">
    <svg width="11" height="11" viewBox="0 0 11 11" fill="none" stroke="#666" strokeWidth="1.2" className="absolute top-[8px] right-[10px]">
      <path d="M0.5 0.5L10.5 10.5M10.5 0.5L0.5 10.5" />
    </svg>
    <h1 className="pt-[28px] text-[19.5px] leading-[26px] font-light tracking-[-0.3px] text-[#217346]">De web</h1>
    <div className="mt-[9px] flex h-[16px] items-center leading-4">
      <span className="-mt-[3px] ml-px size-[10px] rounded-full border border-[#999]" />
      <span className="ml-[4px] w-[50px]">Básico</span>
      <span className="-mt-[3px] flex size-[10px] items-center justify-center rounded-full border border-[#999]">
        <span className="size-[5px] rounded-full bg-[#666]" />
      </span>
      <span className="ml-[4px]">Uso avanzado</span>
    </div>
    <div className="mt-[9px]">
      <Label>
        Partes de la URL <InfoIcon />
      </Label>
    </div>
    <div className="mt-px flex flex-col gap-[5px]">
      <Field value="http://datafaro.adatar.do/api/v1/update/?fmt=csv&id=imae-original" />
      <Field />
    </div>
    <button className="mt-[10px] block h-[22px] w-[104px] border border-[#c6c6c6] text-[11px] leading-5 tracking-[-0.45px]">Agregar elemento</button>
    <div className="mt-[8px]">
      <Label>Vista previa de la URL</Label>
    </div>
    <div className="mt-px">
      <Field readOnly value="http://datafaro.adatar.do/api/v1/update/?fmt=csv&id=imae-original" />
    </div>
    <div className="mt-[19px]">
      <Label>Tiempo de espera del comando en minutos (opcional)</Label>
    </div>
    <div className="mt-px">
      <Field />
    </div>
    <div className="mt-[16px]">
      <Label>
        Parámetros de encabezado de solicitud HTTP (opcional) <InfoIcon />
      </Label>
    </div>
    <div className="mt-px flex gap-[13px]">
      <div className="flex h-[22px] w-[222px] items-center justify-between border border-[#ababab] pr-[8px] pl-[5px]">
        Authorization
        <svg width="6" height="3" viewBox="0 0 6 3" fill="#555" className="-mt-[2px]"><path d="M0 0H6L3 3Z" /></svg>
      </div>
      <div className="flex h-[22px] w-[202px] overflow-hidden border border-[#ababab] pl-[5px] leading-[21px] whitespace-nowrap">
        Token
        <span className="ml-[4px] text-[10px] leading-[18px] tracking-[-0.5px]">*********************************</span>
      </div>
    </div>
    <button className="mt-[9px] block h-[22px] w-[116px] border border-[#c6c6c6] text-[11px] leading-5 tracking-[-0.45px]">Agregar encabezado</button>
    <div className="mt-[30px] flex justify-end gap-[13px] pr-[30px] text-[11px] leading-5 tracking-[-0.45px]">
      <button className="h-[22px] w-[60px] border border-[#217346] text-[#217346]">Aceptar</button>
      <button className="h-[22px] w-[60px] border border-[#c6c6c6]">Cancelar</button>
    </div>
  </div>
);

const App = () => {
  return (
    <div className="relative h-[1006px] w-[1918px] overflow-hidden bg-[#f3f2f1] font-['Open_Sans',sans-serif] text-[#444]">
      <TopBar />
      <Ribbon />
      <FormulaBar />
      <div className="flex h-[783px] bg-[#e6e6e6]">
        <Sheet />
        <VerticalScroll />
      </div>
      <SheetTabs />
      <StatusBar />
      <WebDialog />
    </div>
  );
};

export default App;
